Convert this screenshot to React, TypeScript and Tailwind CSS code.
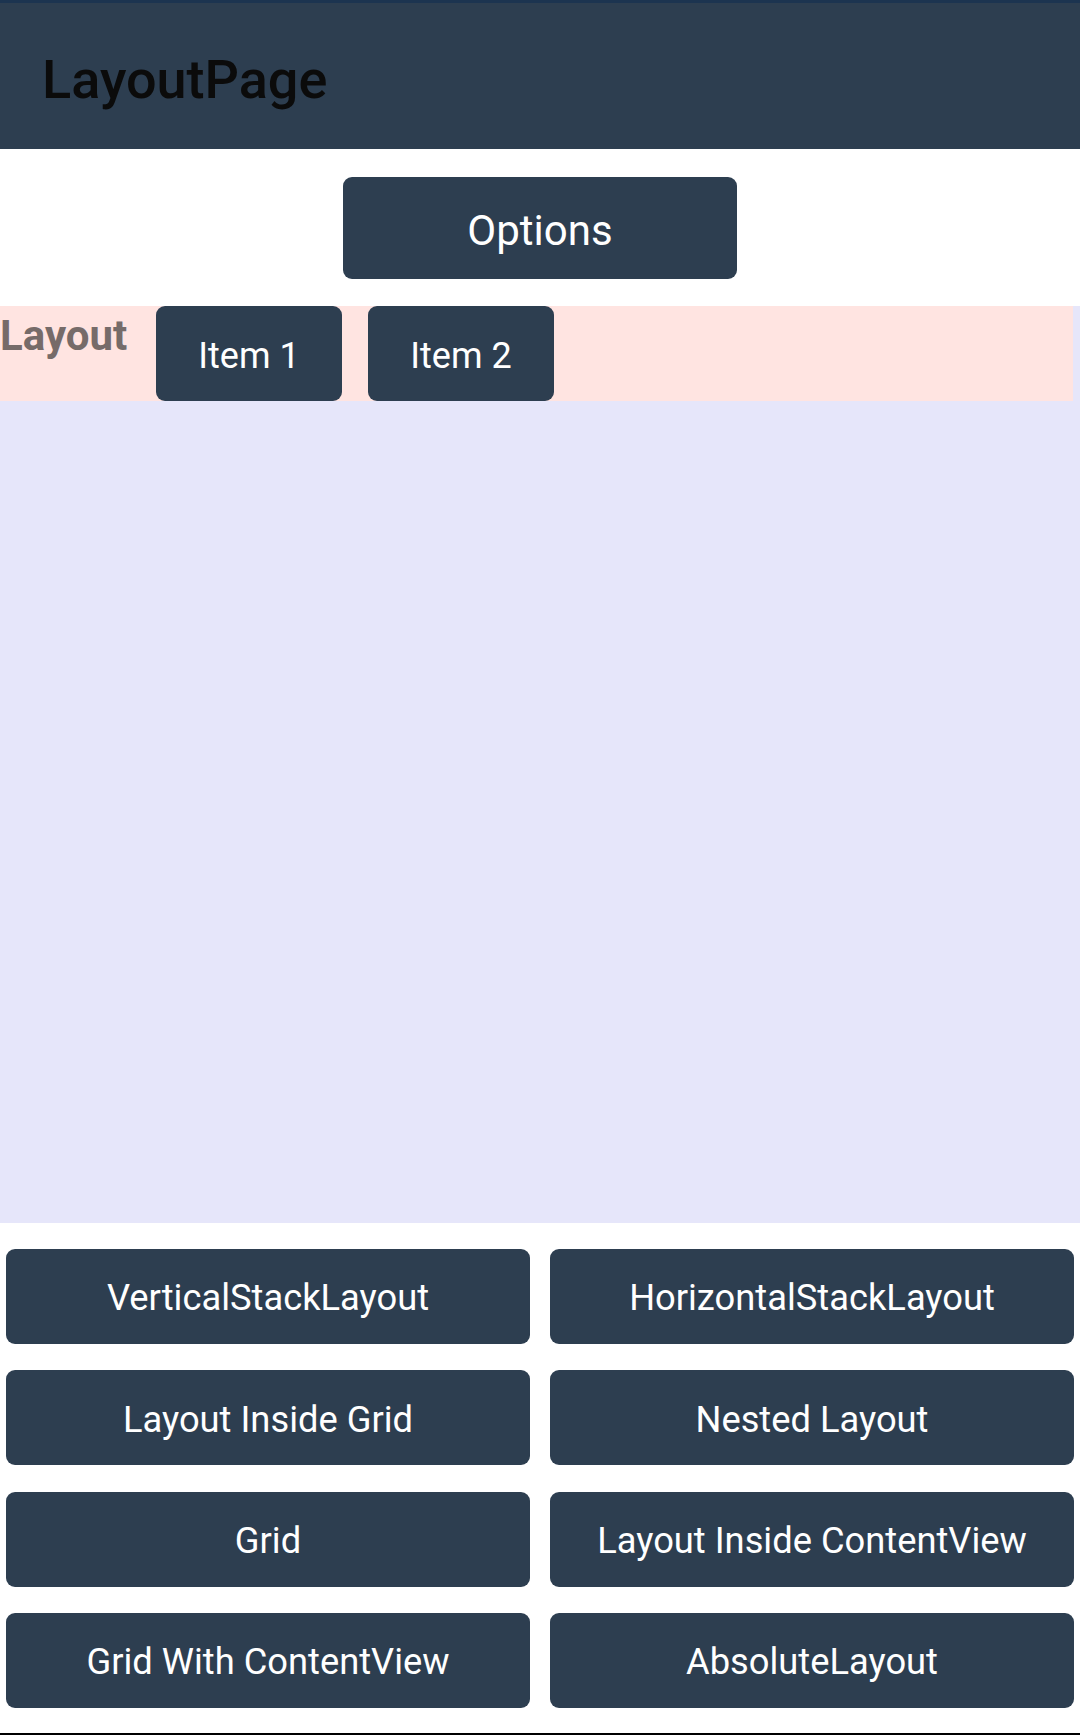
import React from "react";

const gridButtons = [
  "VerticalStackLayout",
  "HorizontalStackLayout",
  "Layout Inside Grid",
  "Nested Layout",
  "Grid",
  "Layout Inside ContentView",
  "Grid With ContentView",
  "AbsoluteLayout",
];

export default function App() {
  return (
    <div
      className="w-[1080px] h-[1735px] bg-white flex flex-col overflow-hidden"
      style={{ fontFamily: "Roboto, 'Noto Sans', sans-serif" }}
    >
      <div className="h-[3px] bg-[#1c3450] shrink-0" />
      <div className="h-[146px] bg-[#2d3e50] shrink-0 flex items-center pl-[42px] pt-[8px]">
        <span className="text-[54px] leading-none font-medium text-[#0b0b0b]">LayoutPage</span>
      </div>

      <div className="h-[157px] shrink-0 flex justify-center pt-[28px]">
        <button className="w-[394px] h-[102px] rounded-[9px] bg-[#2d3e50] text-white text-[42px] leading-none flex items-center justify-center pt-[6px]">
          Options
        </button>
      </div>

      <div className="h-[917px] shrink-0 bg-[#e6e6fa]">
        <div className="w-[1073px] h-[95px] bg-[#ffe4e1] flex items-start">
          <div className="w-[156px] shrink-0 pt-[5px]">
            <span className="text-[42px] leading-[49px] font-bold text-[#766b69]">Layout</span>
          </div>
          <button className="w-[186px] h-[95px] rounded-[9px] bg-[#2d3e50] text-white text-[36px] leading-none flex items-center justify-center pt-[4px]">
            Item 1
          </button>
          <button className="ml-[26px] w-[186px] h-[95px] rounded-[9px] bg-[#2d3e50] text-white text-[36px] leading-none flex items-center justify-center pt-[4px]">
            Item 2
          </button>
        </div>
      </div>

      <div className="flex-1 pt-[26px] px-[6px]">
        <div className="grid grid-cols-2 gap-x-[20px] gap-y-[26.3px]">
          {gridButtons.map((t) => (
            <button
              key={t}
              className="h-[95px] rounded-[9px] bg-[#2d3e50] text-white text-[36.3px] leading-none flex items-center justify-center pt-[4px]"
            >
              {t}
            </button>
          ))}
        </div>
      </div>
      <div className="h-[2px] bg-black shrink-0" />
    </div>
  );
}
